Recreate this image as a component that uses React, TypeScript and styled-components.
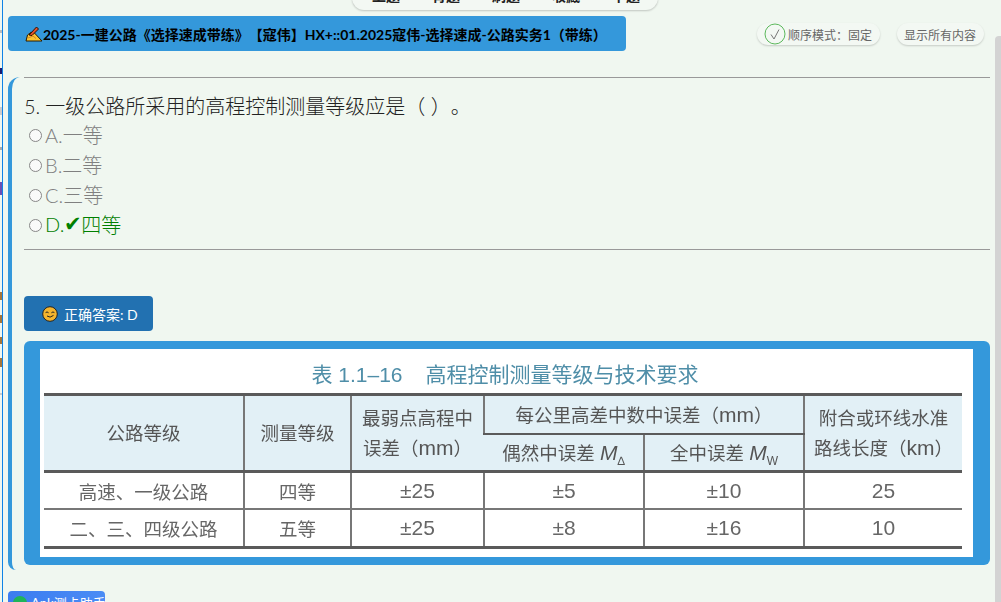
import React from "react";
import styled, { createGlobalStyle } from "styled-components";

const FONT = `Lato, "Noto Sans CJK SC", sans-serif`;

const Global = createGlobalStyle`
  html, body { margin: 0; padding: 0; height: 100%; overflow: hidden; background: #f0f7f0; }
  #root { height: 100%; }
  * { box-sizing: border-box; text-spacing-trim: space-all; }
`;

const Page = styled.div`
  position: relative;
  height: 602px;
  width: 1001px;
  overflow: hidden;
  padding: 16px 11px 0 8px;
  font-family: ${FONT};
`;

const EdgeLine = styled.div`
  position: absolute;
  left: 2px;
  top: 0;
  bottom: 0;
  width: 1px;
  background: #0f83e6;
`;

const EdgeMark = styled.div<{ $top: number; $h: number; $c: string }>`
  position: absolute;
  left: 0;
  width: 2px;
  top: ${(p) => p.$top}px;
  height: ${(p) => p.$h}px;
  background: ${(p) => p.$c};
`;

const Scrollbar = styled.div`
  position: absolute;
  right: 0;
  top: 36px;
  bottom: 0;
  width: 6px;
  background: #d3d3d3;
  border-top-left-radius: 4px;
`;

const TopNav = styled.nav`
  position: absolute;
  top: -10px;
  left: 352px;
  width: 306px;
  height: 20px;
  background: #f3f8f3;
  border-radius: 0 0 12px 12px;
  box-shadow: 0 1px 2px rgba(0, 0, 0, 0.2);
  display: flex;
  gap: 32px;
  padding-left: 20px;
  overflow: hidden;
`;

const TopNavItem = styled.span`
  font-size: 14px;
  font-weight: 700;
  line-height: 20px;
  margin-top: -4px;
  color: #222;
  white-space: nowrap;
`;

const HeaderRow = styled.header`
  display: flex;
  align-items: flex-start;
  justify-content: space-between;
  height: 35px;
`;

const TitleBar = styled.div`
  width: 618px;
  height: 35px;
  background: #3498db;
  border-radius: 4px;
  display: flex;
  align-items: center;
  padding-left: 17px;
  color: #000;
  font-size: 14px;
  font-weight: 700;
  white-space: nowrap;
`;

const Pills = styled.div`
  display: flex;
  gap: 17px;
  margin: 7px 6px 0 0;
`;

const Pill = styled.div`
  height: 22px;
  border-radius: 11px;
  background: #f3f8f3;
  box-shadow: 0 1px 2px rgba(0, 0, 0, 0.18);
  display: flex;
  align-items: center;
  padding: 0 8px 0 7px;
  font-size: 12px;
  color: #666;
  white-space: nowrap;
`;

const CheckCircle = styled.svg`
  width: 22px;
  height: 22px;
  margin-right: 2px;
  flex: none;
`;

const Card = styled.section`
  margin-top: 26px;
  height: 493px;
  border-left: 4px solid #3498db;
  border-radius: 12px 0 0 8px;
  padding-left: 12px;
`;

const Rule = styled.hr`
  border: 0;
  border-top: 1px solid #999;
  margin: 0;
`;

const Question = styled.div`
  margin-top: 13px;
  height: 29px;
  line-height: 30px;
  font-size: 20px;
  font-weight: 300;
  color: #222;
  white-space: nowrap;
`;

const QuestionNumber = styled.span`
  margin-right: 5px;
`;

const OptionRow = styled.div<{ $right?: boolean }>`
  display: flex;
  align-items: center;
  height: 30px;
  font-size: 20px;
  font-weight: 300;
  padding: 0 0 2px 5px;
  color: ${(p) => (p.$right ? "#008000" : "#808080")};
`;

const Radio = styled.span`
  width: 13px;
  height: 13px;
  margin: 2px 3px 0 0;
  border-radius: 50%;
  border: 1.5px solid #888;
  background: #fafafa;
  flex: none;
`;

const Tick = styled.span`
  font-family: "DejaVu Sans", sans-serif;
  font-size: 21px;
  line-height: 1;
  margin: 0 -1px 0 0;
`;

const SecondRule = styled(Rule)`
  margin-top: 9px;
`;

const AnswerButton = styled.div`
  margin-top: 46px;
  width: 129px;
  height: 35px;
  border-radius: 4px;
  background: #2271b1;
  color: #fff;
  font-size: 14px;
  display: flex;
  align-items: center;
  gap: 6px;
  padding-left: 18px;
  white-space: nowrap;
`;

const ImageFrame = styled.div`
  margin-top: 10px;
  height: 224px;
  background: #3498db;
  border-radius: 6px;
  padding: 8px 17px 8px 16px;
`;

const Picture = styled.figure`
  margin: 0;
  height: 208px;
  background: #fff;
  padding: 0 11px 0 4px;
  overflow: hidden;
  font-family: "Liberation Sans", "Noto Sans CJK SC", sans-serif;
`;

const PictureTitle = styled.figcaption`
  height: 44px;
  display: flex;
  align-items: center;
  justify-content: center;
  gap: 23px;
  padding: 3px 0 0 4px;
  font-size: 21px;
  color: #4f8ea8;
  filter: blur(0.35px);
  white-space: pre;
`;

const Table = styled.table`
  width: 918px;
  border-collapse: collapse;
  table-layout: fixed;
  font-size: 18.5px;
  color: #666;
  filter: blur(0.4px);
  border-top: 3px solid #5a5a5a;
  border-bottom: 3px solid #5a5a5a;
`;

const HeadCell = styled.th`
  background: #e2f0f6;
  font-weight: 400;
  color: #555;
  line-height: 29px;
  padding: 0;
  text-align: center;
  border-left: 2px solid #777;
  border-bottom: 3px solid #5a5a5a;
  white-space: nowrap;
  &:first-child { border-left: 0; }
`;

const SubHeadCell = styled(HeadCell)`
  height: 38px;
  line-height: 1;
`;

const GroupCell = styled(HeadCell)`
  height: 39px;
  line-height: 1;
  border-bottom: 2px solid #5a5a5a;
`;

const BodyRow = styled.tr`
  height: 37px;
  &:last-child { height: 39px; }
`;

const BodyCell = styled.td`
  padding: 1px 0 0;
  text-align: center;
  white-space: nowrap;
  border-left: 2px solid #777;
  border-bottom: 2px solid #777;
  &:first-child { border-left: 0; }
  tr:last-child > & { border-bottom: 0; }
`;

const Num = styled.span`
  font-size: 21px;
`;

const Var = styled.i`
  font-size: 21px;
`;

const Sub = styled.sub`
  font-size: 12px;
  font-style: normal;
  line-height: 0;
`;

const Helper = styled.div`
  margin-top: 21px;
  width: 97px;
  height: 26px;
  border-radius: 4px 4px 0 0;
  background: linear-gradient(90deg, #3b7cf0, #4a8cf5);
  color: #fff;
  font-size: 13px;
  display: flex;
  align-items: flex-start;
  gap: 4px;
  padding: 2px 0 0 5px;
  white-space: nowrap;
`;

const HelperDot = styled.span`
  width: 14px;
  height: 14px;
  margin-top: 3px;
  border-radius: 50%;
  background: #1fb45a;
  flex: none;
`;

const marks = [
  { top: 30, h: 3, c: "#bbb" },
  { top: 68, h: 6, c: "#1a1a6e" },
  { top: 107, h: 8, c: "#ccc" },
  { top: 147, h: 3, c: "#aaa" },
  { top: 182, h: 13, c: "#6a4fb5" },
  { top: 292, h: 8, c: "#a5763a" },
  { top: 315, h: 8, c: "#a5763a" },
  { top: 337, h: 7, c: "#a5763a" },
  { top: 358, h: 9, c: "#a5763a" },
  { top: 393, h: 2, c: "#ccc" },
];

const WritingHand = () => (
  <svg width="18" height="16" viewBox="0 0 18 16" style={{ flex: "none" }}>
    <path d="M1 15 L2.5 9 Q6 5 9 6.5 L17 15 Z" fill="#fbc531" stroke="#2a1a00" strokeWidth="1" />
    <path d="M4 9 L11.5 1 L13.5 3 L7 9.5 Z" fill="#e4512b" stroke="#2a1000" strokeWidth="1" />
    <path d="M3 12 L8 10 L11 12.5" fill="none" stroke="#d9822b" strokeWidth="1" />
  </svg>
);

const Smile = () => (
  <svg width="16" height="16" viewBox="0 0 16 16" style={{ flex: "none" }}>
    <circle cx="8" cy="8" r="7.3" fill="#f5b52e" stroke="#222" strokeWidth="1" />
    <path d="M3.6 6.6 Q5 5.2 6.6 6.8 M9.4 6.8 Q11 5.2 12.4 6.6" fill="none" stroke="#222" strokeWidth="1" />
    <path d="M5 10 Q8 12.5 11.5 9.4" fill="none" stroke="#222" strokeWidth="1" />
  </svg>
);

const options = ["A.一等", "B.二等", "C.三等"];

const rows = [
  { name: "高速、一级公路", level: "四等", vals: ["±25", "±5", "±10", "25"] },
  { name: "二、三、四级公路", level: "五等", vals: ["±25", "±8", "±16", "10"] },
];

export default function App() {
  return (
    <Page>
      <Global />
      <EdgeLine />
      {marks.map((m) => (
        <EdgeMark key={m.top} $top={m.top} $h={m.h} $c={m.c} />
      ))}
      <TopNav>
        <TopNavItem>上题</TopNavItem>
        <TopNavItem>背题</TopNavItem>
        <TopNavItem>刷题</TopNavItem>
        <TopNavItem>收藏</TopNavItem>
        <TopNavItem>下题</TopNavItem>
      </TopNav>
      <Scrollbar />
      <HeaderRow>
        <TitleBar>
          <WritingHand />
          2025-一建公路《选择速成带练》【寇伟】HX+::01.2025寇伟-选择速成-公路实务1（带练）
        </TitleBar>
        <Pills>
          <Pill>
            <CheckCircle viewBox="0 0 22 22">
              <circle cx="11" cy="11" r="10" fill="none" stroke="#5cb85c" strokeWidth="1" />
              <path d="M7 11.5 L10 16 L15 6.5" fill="none" stroke="#777" strokeWidth="1" />
            </CheckCircle>
            顺序模式：固定
          </Pill>
          <Pill>显示所有内容</Pill>
        </Pills>
      </HeaderRow>
      <Card>
        <Rule />
        <Question>
          <QuestionNumber>5.</QuestionNumber>一级公路所采用的高程控制测量等级应是（ ）。
        </Question>
        {options.map((o) => (
          <OptionRow key={o}>
            <Radio />
            {o}
          </OptionRow>
        ))}
        <OptionRow $right>
          <Radio />
          D.<Tick>✔</Tick>四等
        </OptionRow>
        <SecondRule />
        <AnswerButton>
          <Smile />
          正确答案: D
        </AnswerButton>
        <ImageFrame>
          <Picture>
            <PictureTitle>
              <span>表 1.1–16</span>
              <span>高程控制测量等级与技术要求</span>
            </PictureTitle>
            <Table>
              <colgroup>
                <col width="200" />
                <col width="107" />
                <col width="133" />
                <col width="160" />
                <col width="160" />
                <col width="158" />
              </colgroup>
              <thead>
                <tr>
                  <HeadCell rowSpan={2}>公路等级</HeadCell>
                  <HeadCell rowSpan={2}>测量等级</HeadCell>
                  <HeadCell rowSpan={2}>最弱点高程中<br />误差（<Num>mm</Num>）</HeadCell>
                  <GroupCell colSpan={2}>每公里高差中数中误差（<Num>mm</Num>）</GroupCell>
                  <HeadCell rowSpan={2}>附合或环线水准<br />路线长度（<Num>km</Num>）</HeadCell>
                </tr>
                <tr>
                  <SubHeadCell>偶然中误差 <Var>M</Var><Sub>∆</Sub></SubHeadCell>
                  <SubHeadCell>全中误差 <Var>M</Var><Sub>W</Sub></SubHeadCell>
                </tr>
              </thead>
              <tbody>
                {rows.map((r) => (
                  <BodyRow key={r.name}>
                    <BodyCell>{r.name}</BodyCell>
                    <BodyCell>{r.level}</BodyCell>
                    {r.vals.map((v, i) => (
                      <BodyCell key={i}><Num>{v}</Num></BodyCell>
                    ))}
                  </BodyRow>
                ))}
              </tbody>
            </Table>
          </Picture>
        </ImageFrame>
      </Card>
      <Helper>
        <HelperDot />
        Ank测卡助手
      </Helper>
    </Page>
  );
}
